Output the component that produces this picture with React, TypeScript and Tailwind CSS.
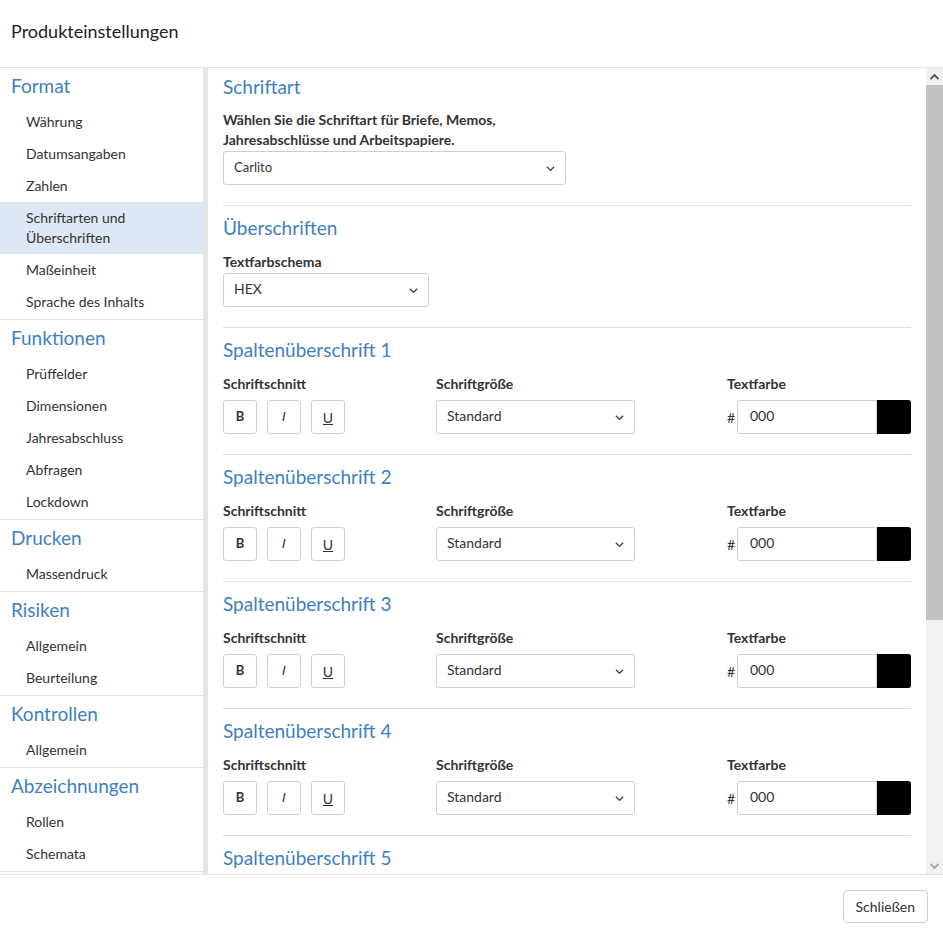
import React from "react";

const nav = [
  { title: "Format", items: ["Währung", "Datumsangaben", "Zahlen", "Schriftarten und Überschriften", "Maßeinheit", "Sprache des Inhalts"] },
  { title: "Funktionen", items: ["Prüffelder", "Dimensionen", "Jahresabschluss", "Abfragen", "Lockdown"] },
  { title: "Drucken", items: ["Massendruck"] },
  { title: "Risiken", items: ["Allgemein", "Beurteilung"] },
  { title: "Kontrollen", items: ["Allgemein"] },
  { title: "Abzeichnungen", items: ["Rollen", "Schemata"] },
];

function Chevron() {
  return (
    <svg width="9" height="5" viewBox="0 0 9 5" className="shrink-0">
      <path d="M0.8 0.8l3.7 3.5 3.7-3.5" fill="none" stroke="#444" strokeWidth="1.3" />
    </svg>
  );
}

function Select({ value, w, small }: { value: string; w: string; small?: boolean }) {
  return (
    <div className={`${w} h-[34px] border border-[#cfcfcf] rounded-[3px] bg-white flex items-center justify-between pl-[10px] pr-[10px]`}>
      <span className={small ? "text-[13px]" : "text-[14px] pb-[3px]"}>{value}</span>
      <Chevron />
    </div>
  );
}

function Heading({ children }: { children: React.ReactNode }) {
  return <div className="h-[28px] leading-[28px] text-[19px] text-[#3f7fbf]">{children}</div>;
}

function ColumnSection({ n }: { n: number }) {
  return (
    <div className="pt-[8px] pb-[20px] border-b border-[#e0e0e0]">
      <Heading>Spaltenüberschrift {n}</Heading>
      <div className="flex mt-[10px]">
        <div className="w-[213px]">
          <div className="text-[14px] font-bold leading-[20px]">Schriftschnitt</div>
          <div className="flex gap-[10px] mt-[6px]">
            <div className="w-[34px] h-[34px] border border-[#cfcfcf] rounded-[3px] flex items-center justify-center text-[13px] font-bold">B</div>
            <div className="w-[34px] h-[34px] border border-[#cfcfcf] rounded-[3px] flex items-center justify-center text-[13px] italic font-['DejaVu_Sans',sans-serif]">I</div>
            <div className="w-[34px] h-[34px] border border-[#cfcfcf] rounded-[3px] flex items-center justify-center text-[14px] underline">U</div>
          </div>
        </div>
        <div className="w-[199px]">
          <div className="text-[14px] font-bold leading-[20px]">Schriftgröße</div>
          <div className="mt-[6px]">
            <Select value="Standard" w="w-[199px]" />
          </div>
        </div>
        <div className="w-[184px] ml-[92px]">
          <div className="text-[14px] font-bold leading-[20px]">Textfarbe</div>
          <div className="flex mt-[6px] h-[34px] items-center">
            <span className="w-[10px] text-[14px]">#</span>
            <div className="w-[140px] h-[34px] border border-[#cfcfcf] rounded-l-[3px] flex items-center pl-[12px] pb-[3px] text-[14px]">000</div>
            <div className="w-[34px] h-[34px] bg-black rounded-r-[3px]" />
          </div>
        </div>
      </div>
    </div>
  );
}

export default function App() {
  return (
    <div className="w-[943px] h-[934px] flex flex-col bg-white font-['Lato',sans-serif] text-[#333] overflow-hidden">
      <div className="h-[68px] shrink-0 border-b border-[#e3e3e3] flex items-center px-[11px] pb-[4px] text-[18px] text-[#222]">
        Produkteinstellungen
      </div>
      <div className="flex flex-1 min-h-0">
        <div className="w-[208px] shrink-0 border-r-[5px] border-[#e6e6e6] overflow-hidden">
          {nav.map((s) => (
            <div key={s.title} className="border-b border-[#e2e2e2] pb-[1px]">
              <div className="h-[38px] flex items-center pl-[11px] pb-[1px] text-[19px] text-[#3f7fbf]">{s.title}</div>
              {s.items.map((it) => (
                <div
                  key={it}
                  className={`pl-[26px] pr-[40px] py-[6px] leading-[20px] text-[14px] ${it === "Schriftarten und Überschriften" ? "bg-[#dce8f3]" : ""}`}
                >
                  {it}
                </div>
              ))}
            </div>
          ))}
        </div>
        <div className="flex-1 overflow-hidden px-[15px]">
          <div className="pt-[5px] pb-[20px] border-b border-[#e0e0e0]">
            <Heading>Schriftart</Heading>
            <div className="mt-[9px] w-[343px] text-[14px] font-bold leading-[20px]">
              Wählen Sie die Schriftart für Briefe, Memos, Jahresabschlüsse und Arbeitspapiere.
            </div>
            <div className="mt-[1px]">
              <Select value="Carlito" w="w-[343px]" small />
            </div>
          </div>
          <div className="pt-[8px] pb-[20px] border-b border-[#e0e0e0]">
            <Heading>Überschriften</Heading>
            <div className="mt-[10px] text-[14px] font-bold leading-[20px]">Textfarbschema</div>
            <div className="mt-[1px]">
              <Select value="HEX" w="w-[206px]" />
            </div>
          </div>
          {[1, 2, 3, 4, 5].map((n) => (
            <ColumnSection key={n} n={n} />
          ))}
        </div>
        <div className="w-[17px] shrink-0 bg-[#f1f1f1] flex flex-col">
          <div className="h-[17px] flex items-center justify-center">
            <svg width="9" height="6" viewBox="0 0 9 6">
              <path d="M0.5 5L4.5 1L8.5 5" fill="none" stroke="#505050" strokeWidth="1.8" />
            </svg>
          </div>
          <div className="h-[535px] bg-[#c1c1c1]" />
          <div className="flex-1" />
          <div className="h-[17px] flex items-center justify-center">
            <svg width="9" height="6" viewBox="0 0 9 6">
              <path d="M0.5 1L4.5 5L8.5 1" fill="none" stroke="#a3a3a3" strokeWidth="1.8" />
            </svg>
          </div>
        </div>
      </div>
      <div className="h-[60px] shrink-0 border-t border-[#e3e3e3] flex items-center justify-end pr-[15px] pt-[4px]">
        <button className="h-[33px] px-[12px] border border-[#cfcfcf] rounded-[4px] text-[14px] text-[#333] bg-white">
          Schließen
        </button>
      </div>
    </div>
  );
}
